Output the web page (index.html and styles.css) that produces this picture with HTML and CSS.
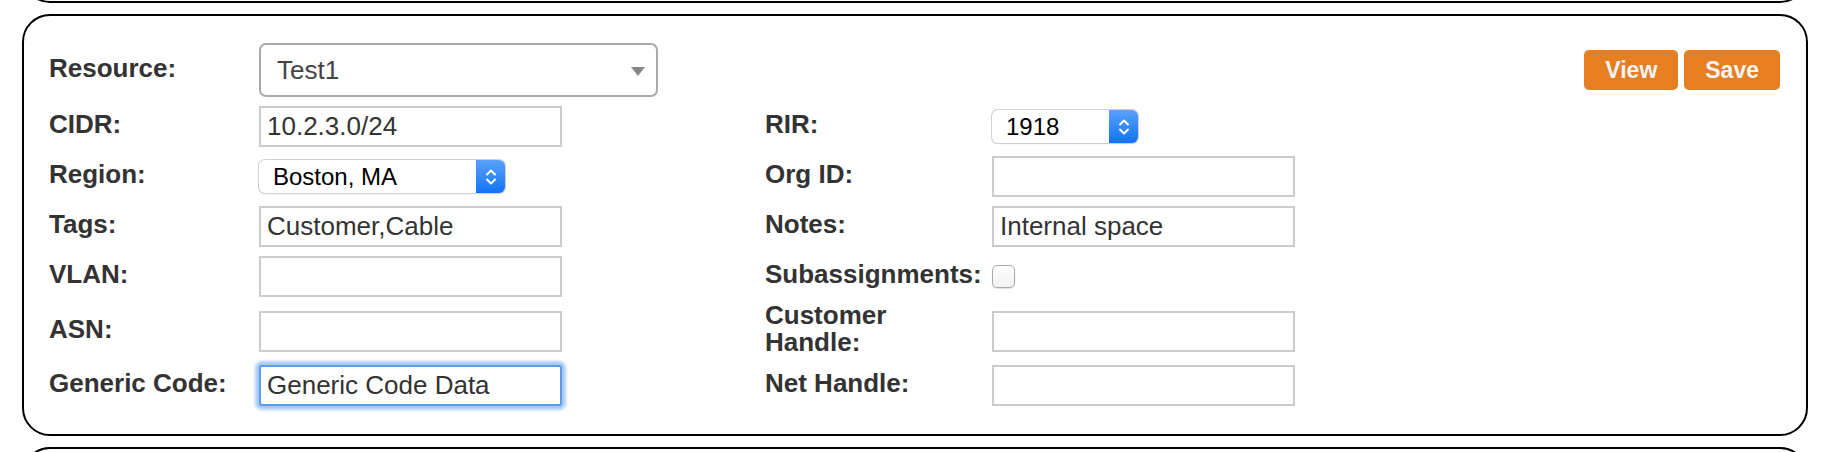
FILE: index.html
```html
<!DOCTYPE html>
<html lang="en">
<head>
<meta charset="utf-8">
<title>Resource form</title>
<link rel="stylesheet" href="styles.css">
</head>
<body>
<div class="page">
  <section class="panel panel--prev"></section>

  <section class="panel">
    <form class="form-grid">
      <label class="lbl">Resource:</label>
      <div class="fancy-select"><span class="fancy-select__value">Test1</span><span class="fancy-select__caret"></span></div>
      <div class="actions">
        <button type="button" class="btn">View</button>
        <button type="button" class="btn">Save</button>
      </div>

      <label class="lbl">CIDR:</label>
      <input class="field" type="text" value="10.2.3.0/24">
      <label class="lbl lbl--right">RIR:</label>
      <div class="native-select native-select--small">
        <span class="native-select__value">1918</span>
        <span class="native-select__btn"><svg width="12" height="20" viewBox="0 0 12 20"><path d="M2 7.5 L6 3.5 L10 7.5 M2 12.5 L6 16.5 L10 12.5" fill="none" stroke="#fff" stroke-width="2" stroke-linecap="round" stroke-linejoin="round"/></svg></span>
      </div>

      <label class="lbl">Region:</label>
      <div class="native-select native-select--region">
        <span class="native-select__value">Boston, MA</span>
        <span class="native-select__btn"><svg width="12" height="20" viewBox="0 0 12 20"><path d="M2 7.5 L6 3.5 L10 7.5 M2 12.5 L6 16.5 L10 12.5" fill="none" stroke="#fff" stroke-width="2" stroke-linecap="round" stroke-linejoin="round"/></svg></span>
      </div>
      <label class="lbl lbl--right">Org ID:</label>
      <input class="field" type="text" value="">

      <label class="lbl">Tags:</label>
      <input class="field" type="text" value="Customer,Cable">
      <label class="lbl lbl--right">Notes:</label>
      <input class="field" type="text" value="Internal space">

      <label class="lbl">VLAN:</label>
      <input class="field" type="text" value="">
      <label class="lbl lbl--right">Subassignments:</label>
      <input class="check" type="checkbox">

      <label class="lbl">ASN:</label>
      <input class="field" type="text" value="">
      <label class="lbl lbl--right">Customer Handle:</label>
      <input class="field" type="text" value="">

      <label class="lbl">Generic Code:</label>
      <input class="field field--focus" type="text" value="Generic Code Data">
      <label class="lbl lbl--right">Net Handle:</label>
      <input class="field" type="text" value="">
    </form>
  </section>

  <section class="panel panel--next"></section>
</div>
</body>
</html>
```

FILE: styles.css
```css
html, body {
  margin: 0;
  padding: 0;
  background: #ffffff;
}

body {
  font-family: "Liberation Sans", Arial, sans-serif;
  color: #333333;
}

.page {
  height: 452px;
  overflow: hidden;
  padding: 0 22px;
  display: flex;
  flex-direction: column;
  gap: 11px;
}

.panel {
  flex: none;
  box-sizing: border-box;
  border: 2px solid #000000;
  border-radius: 28px;
  background: #ffffff;
  padding: 27px 26px 28px 25px;
}

.panel--prev {
  height: 300px;
  margin-top: -297px;
}

.panel--next {
  height: 300px;
}

.form-grid {
  display: grid;
  grid-template-columns: 210px 506px 227px 1fr;
  row-gap: 9px;
  align-items: center;
  justify-items: start;
  margin: 0;
}

.lbl {
  font-weight: bold;
  font-size: 26px;
  line-height: 27px;
  color: #333333;
  box-sizing: border-box;
  width: 100%;
  padding-right: 8px;
  margin-top: -4px;
}

.field {
  box-sizing: border-box;
  width: 303px;
  height: 41px;
  margin: 0;
  border: 2px solid #cccccc;
  border-radius: 0;
  padding: 0 6px;
  font-family: "Liberation Sans", Arial, sans-serif;
  font-size: 26px;
  color: #333333;
  background: #ffffff;
  outline: none;
}

.field--focus {
  border-color: #5b9ce9;
  border-radius: 3px;
  box-shadow: 0 0 0 2px #a6c9f6, 0 0 3px 4px rgba(110, 165, 240, 0.55);
}

.fancy-select {
  box-sizing: border-box;
  width: 399px;
  height: 54px;
  border: 2px solid #aaaaaa;
  border-radius: 7px;
  background: #ffffff;
  display: flex;
  align-items: center;
  justify-content: space-between;
  padding: 0 11px 0 16px;
}

.fancy-select__value {
  font-size: 26px;
  color: #444444;
}

.fancy-select__caret {
  width: 0;
  height: 0;
  border-left: 7px solid transparent;
  border-right: 7px solid transparent;
  border-top: 9px solid #888888;
  margin-top: 3px;
}

.actions {
  grid-column: 3 / span 2;
  justify-self: end;
  display: flex;
  gap: 6px;
}

.btn {
  height: 40px;
  padding: 0 21px;
  border: none;
  border-radius: 5px;
  background: #e67f22;
  color: #f4f4f4;
  font-family: "Liberation Sans", Arial, sans-serif;
  font-weight: bold;
  font-size: 23px;
  line-height: 40px;
  cursor: pointer;
}

.native-select {
  box-sizing: border-box;
  height: 33px;
  display: flex;
  align-items: stretch;
  border-radius: 6px;
  background: #ffffff;
  box-shadow: 0 0 0 1px #d0d0d0, 0 1px 1px rgba(0, 0, 0, 0.25);
  overflow: hidden;
}

.native-select--region {
  width: 246px;
}

.native-select--small {
  width: 146px;
}

.native-select__value {
  flex: 1;
  display: flex;
  align-items: center;
  padding-left: 14px;
  font-size: 24px;
  color: #000000;
}

.native-select__btn {
  width: 29px;
  display: flex;
  align-items: center;
  justify-content: center;
  background: linear-gradient(#5aa2fb, #1272f6);
}

.check {
  appearance: none;
  -webkit-appearance: none;
  box-sizing: border-box;
  width: 23px;
  height: 23px;
  margin: 0;
  border: 1px solid #a9a9a9;
  border-radius: 5px;
  background: linear-gradient(#ffffff, #f2f2f2);
  box-shadow: 0 1px 1px rgba(0, 0, 0, 0.12);
}
```
